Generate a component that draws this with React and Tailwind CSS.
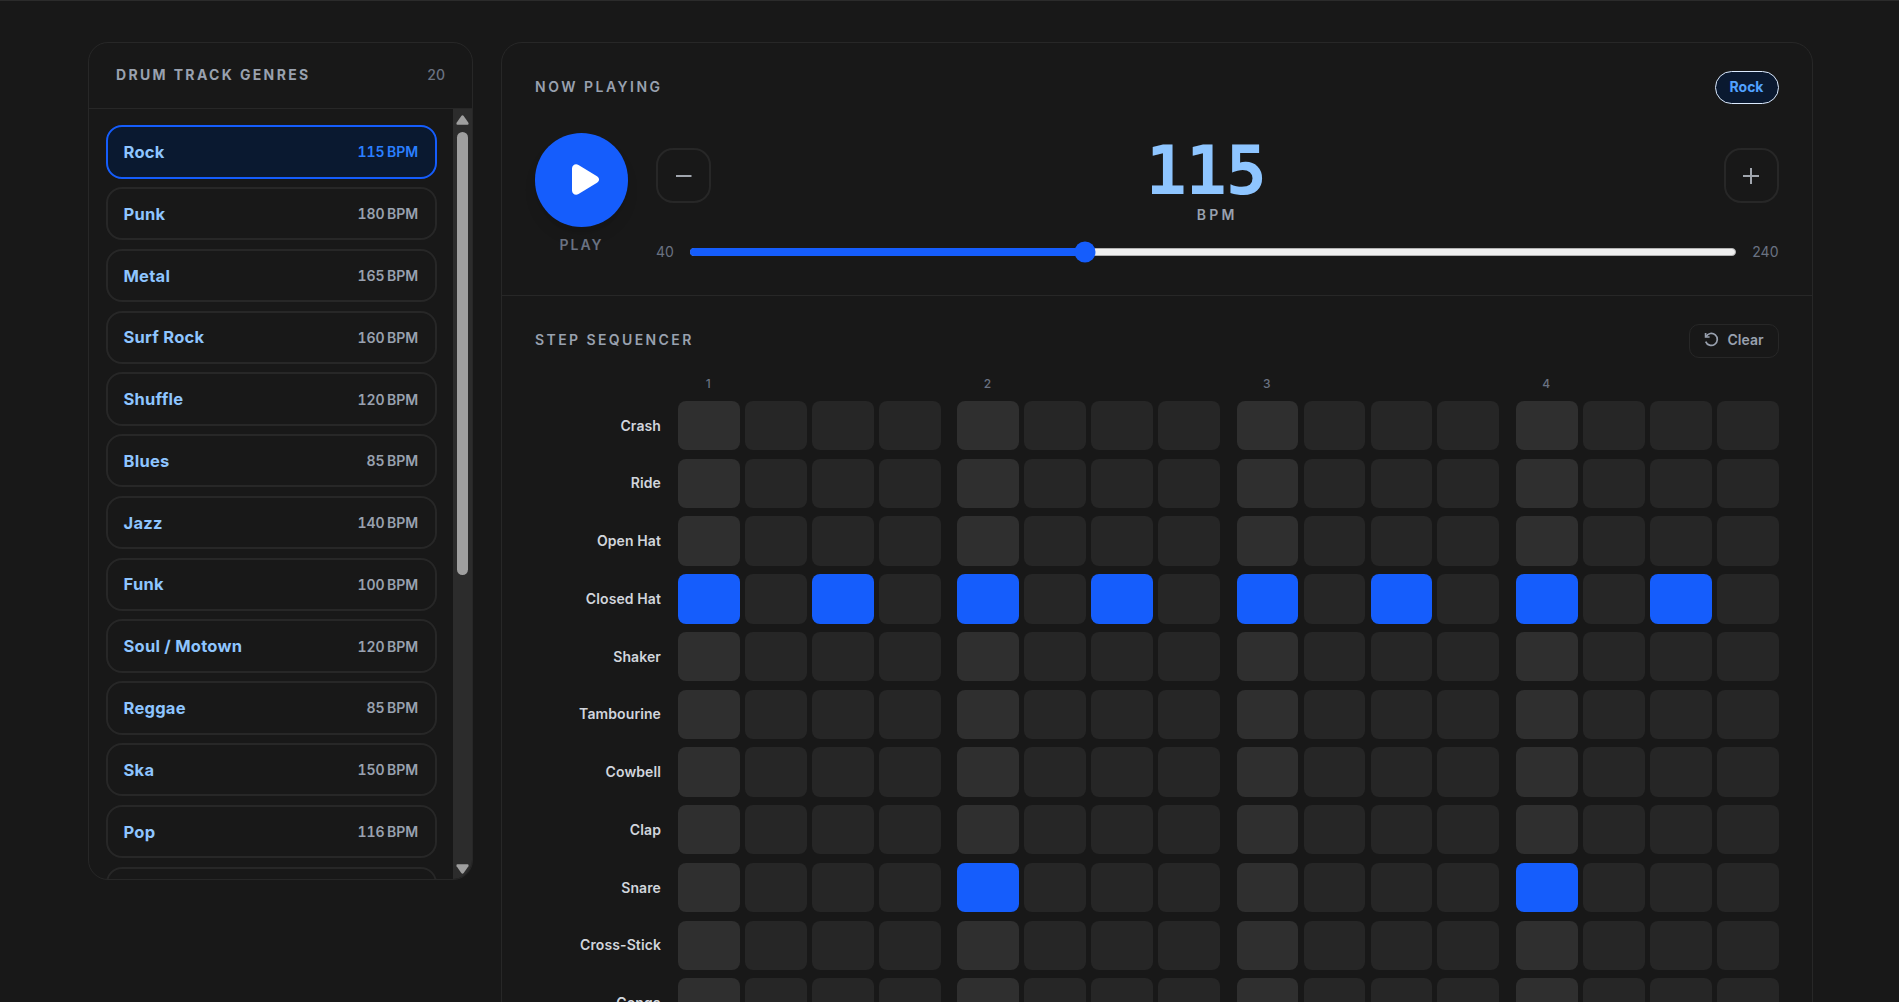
import { useState } from 'react';

const GENRES = [
  { name: 'Rock', bpm: 115 },
  { name: 'Punk', bpm: 180 },
  { name: 'Metal', bpm: 165 },
  { name: 'Surf Rock', bpm: 160 },
  { name: 'Shuffle', bpm: 120 },
  { name: 'Blues', bpm: 85 },
  { name: 'Jazz', bpm: 140 },
  { name: 'Funk', bpm: 100 },
  { name: 'Soul / Motown', bpm: 120 },
  { name: 'Reggae', bpm: 85 },
  { name: 'Ska', bpm: 150 },
  { name: 'Pop', bpm: 116 },
];

const INSTRUMENTS = [
  { name: 'Crash', steps: [] },
  { name: 'Ride', steps: [] },
  { name: 'Open Hat', steps: [] },
  { name: 'Closed Hat', steps: [0, 2, 4, 6, 8, 10, 12, 14] },
  { name: 'Shaker', steps: [] },
  { name: 'Tambourine', steps: [] },
  { name: 'Cowbell', steps: [] },
  { name: 'Clap', steps: [] },
  { name: 'Snare', steps: [4, 12] },
  { name: 'Cross-Stick', steps: [] },
  { name: 'Conga', steps: [] },
];

const MIN_BPM = 40;
const MAX_BPM = 240;
const THUMB_SIZE = 21;

function GenreList({ selected, onSelect }) {
  return (
    <aside className="w-[385px] h-[838px] shrink-0 flex flex-col rounded-[20px] border border-[#272727] overflow-hidden">
      <div className="h-[66px] shrink-0 flex items-center justify-between px-[27px] pb-[2px] border-b border-[#272727]">
        <h2 className="text-[14px] font-bold tracking-[2.35px] text-[#99a1af]">DRUM TRACK GENRES</h2>
        <span className="text-[14px] font-medium text-[#6a7282]">20</span>
      </div>
      <div className="flex-1 min-h-0 flex">
        <div className="flex-1 min-w-0 overflow-hidden flex flex-col gap-[8.4px] pl-[17px] pr-[16px] pt-[16.2px]">
          {GENRES.map((genre) => {
            const active = genre.name === selected;
            return (
              <button
                key={genre.name}
                onClick={() => onSelect(genre)}
                className={`h-[53.4px] shrink-0 flex items-center justify-between rounded-[16px] border-2 pl-[15.5px] pr-[17px] ${active ? 'border-[#155dfc] bg-[#0a1930]' : 'border-[#272727]'}`}
              >
                <span className="pt-px text-[16.5px] font-bold tracking-[0.25px] text-[#8ec5ff]">{genre.name}</span>
                <span className={`text-[14px] font-semibold tabular-nums tracking-[-0.1px] [word-spacing:-1px] ${active ? 'text-[#2b7fff]' : 'text-[#99a1af]'}`}>{genre.bpm} BPM</span>
              </button>
            );
          })}
          <div className="h-[53.4px] shrink-0 rounded-[16px] border-2 border-[#272727]" />
        </div>
        <div className="w-[19px] shrink-0 flex flex-col items-center bg-[#2c2c2c]">
          <svg className="w-[13px] h-[10px] mt-[6px] shrink-0" viewBox="0 0 13 10" fill="#9f9f9f">
            <path d="M5.3 1 Q6.5-.6 7.7 1 L12.4 7.7 Q13 9.5 11.6 9.7 H1.4 Q0 9.5.6 7.7Z" />
          </svg>
          <div className="w-[11px] h-[443px] mt-[7px] shrink-0 rounded-full bg-[#9f9f9f]" />
          <svg className="w-[13px] h-[10px] mt-auto mb-[5px] shrink-0" viewBox="0 0 13 10" fill="#9f9f9f">
            <path d="M5.3 9 Q6.5 10.6 7.7 9 L12.4 2.3 Q13 .5 11.6.3 H1.4 Q0 .5.6 2.3Z" />
          </svg>
        </div>
      </div>
    </aside>
  );
}

function TempoButton({ onClick, children }) {
  return (
    <button onClick={onClick} className="size-[55px] flex items-center justify-center rounded-[17px] border-2 border-[#272727] text-[#a1a6ae]">
      <svg className="size-[16px]" viewBox="0 0 16 16" fill="none" stroke="currentColor" strokeWidth="2">
        {children}
      </svg>
    </button>
  );
}

function NowPlaying({ genre, bpm, setBpm }) {
  const ratio = (bpm - MIN_BPM) / (MAX_BPM - MIN_BPM);
  const thumbLeft = `calc(${ratio * 100}% + ${(0.5 - ratio) * THUMB_SIZE}px)`;

  return (
    <section className="h-[253px] px-[33px] pt-[28px] border-b border-[#272727]">
      <div className="h-[33px] flex items-center justify-between">
        <h2 className="-mt-[2px] text-[14px] font-semibold tracking-[2.5px] text-[#99a1af]">NOW PLAYING</h2>
        <span className="w-[64px] h-[33px] pb-[2px] flex items-center justify-center rounded-full border border-[#dbeafe] bg-[#0a1930] text-[14px] font-bold text-[#51a2ff]">{genre}</span>
      </div>
      <div className="mt-[29px] flex gap-[28px]">
        <div className="w-[93px] flex flex-col items-center">
          <button className="size-[93.5px] shrink-0 flex items-center justify-center rounded-full bg-[#155dfc] shadow-lg">
            <svg className="w-[28px] h-[31px] ml-[9px]" viewBox="0 0 28 31" fill="#fff">
              <path d="M0 4.5C0 1 3.5-.8 6.5.9L25 12.2c2.7 1.6 2.7 5 0 6.6L6.5 30.1C3.5 31.8 0 30 0 26.5Z" />
            </svg>
          </button>
          <span className="mt-[8px] text-[14px] leading-[20px] font-semibold tracking-[2px] text-[#6a7282]">PLAY</span>
        </div>
        <div className="flex-1 flex flex-col">
          <div className="h-[92px] flex items-start justify-between">
            <div className="pt-[15px]">
              <TempoButton onClick={() => setBpm(Math.max(MIN_BPM, bpm - 1))}>
                <path d="M-.5 8H15.5" />
              </TempoButton>
            </div>
            <div className="flex flex-col items-center">
              <span className="pt-[2px] -mb-[2px] pr-[23px] font-['DejaVu_Sans_Mono',monospace] text-[68px] leading-[72px] font-bold tracking-[-0.9px] text-[#8ec5ff]">{bpm}</span>
              <span className="text-[14px] leading-[20px] font-semibold tracking-[3.2px] text-[#99a1af]">BPM</span>
            </div>
            <div className="pt-[15px]">
              <TempoButton onClick={() => setBpm(Math.min(MAX_BPM, bpm + 1))}>
                <path d="M0 8H16M8 0V16" />
              </TempoButton>
            </div>
          </div>
          <div className="mt-[16px] h-[21px] flex items-center text-[14px] text-[#6a7282]">
            <span className="w-[34px]">40</span>
            <div className="relative flex-1 h-[8px] rounded-full bg-[#efefef] border border-[#b2b2b2]">
              <div className="absolute -inset-y-px -left-px rounded-full bg-[#155dfc]" style={{ width: thumbLeft }} />
              <div className="absolute top-1/2 size-[21px] -translate-x-1/2 -translate-y-1/2 rounded-full bg-[#155dfc]" style={{ left: thumbLeft }} />
            </div>
            <span className="w-[43px] text-right">240</span>
          </div>
        </div>
      </div>
    </section>
  );
}

function StepSequencer({ tracks, onToggle, onClear }) {
  return (
    <section className="px-[33px] pt-[28px]">
      <div className="h-[34px] flex items-center justify-between">
        <h2 className="-mt-[3px] text-[14px] font-semibold tracking-[2.4px] text-[#99a1af]">STEP SEQUENCER</h2>
        <button onClick={onClear} className="w-[90px] h-[34px] flex items-center pl-[14px] pb-[3px] gap-[9px] rounded-[10px] border border-[#272727] text-[14px] font-semibold text-[#99a1af]">
          <svg className="size-[15px]" viewBox="0 0 15 15" fill="none" stroke="currentColor" strokeWidth="1.7">
            <path d="M1.6 1V5H5.6" />
            <path d="M2 4.6A6 6 0 1 1 1.7 9.6" />
          </svg>
          Clear
        </button>
      </div>

      <div className="mt-[17px] h-[18px] pl-[143px] flex gap-[16.6px]">
        {[1, 2, 3, 4].map((beat) => (
          <div key={beat} className="flex-1">
            <div className="w-[60.5px] text-center text-[12px] leading-[18px] font-medium text-[#6a7282]">{beat}</div>
          </div>
        ))}
      </div>

      <div className="mt-[8px] flex flex-col gap-[8.4px]">
        {tracks.map((track, row) => (
          <div key={track.name} className="h-[49.35px] shrink-0 flex items-center">
            <span className="w-[143px] pr-[17px] pb-px text-right text-[14px] font-semibold tracking-[0.1px] text-[#d1d5dc]">{track.name}</span>
            <div className="flex-1 h-full flex gap-[16.6px]">
              {[0, 1, 2, 3].map((beat) => (
                <div key={beat} className="flex-1 flex gap-[5.2px]">
                  {[0, 1, 2, 3].map((sub) => {
                    const step = beat * 4 + sub;
                    const off = sub === 0 ? 'bg-[#2f2f2f]' : 'bg-[#262626]';
                    return (
                      <button
                        key={step}
                        onClick={() => onToggle(row, step)}
                        className={`flex-1 rounded-[8px] ${track.steps.includes(step) ? 'bg-[#155dfc]' : off}`}
                      />
                    );
                  })}
                </div>
              ))}
            </div>
          </div>
        ))}
      </div>
    </section>
  );
}

export default function App() {
  const [genre, setGenre] = useState('Rock');
  const [bpm, setBpm] = useState(115);
  const [tracks, setTracks] = useState(INSTRUMENTS);

  const selectGenre = (next) => {
    setGenre(next.name);
    setBpm(next.bpm);
  };

  const toggleStep = (row, step) => {
    setTracks((prev) => prev.map((track, i) => {
      if (i !== row) return track;
      const steps = track.steps.includes(step) ? track.steps.filter((s) => s !== step) : [...track.steps, step];
      return { ...track, steps };
    }));
  };

  const clear = () => setTracks((prev) => prev.map((track) => ({ ...track, steps: [] })));

  return (
    <div className="h-screen overflow-hidden border-t border-[#2b2b2b] bg-[#181818] font-[Inter,sans-serif]">
      <div className="flex items-start gap-[28px] pt-[41px] pl-[88px]">
        <GenreList selected={genre} onSelect={selectGenre} />
        <main className="w-[1311.5px] h-[1100px] rounded-t-[21px] border border-[#272727]">
          <NowPlaying genre={genre} bpm={bpm} setBpm={setBpm} />
          <StepSequencer tracks={tracks} onToggle={toggleStep} onClear={clear} />
        </main>
      </div>
    </div>
  );
}
